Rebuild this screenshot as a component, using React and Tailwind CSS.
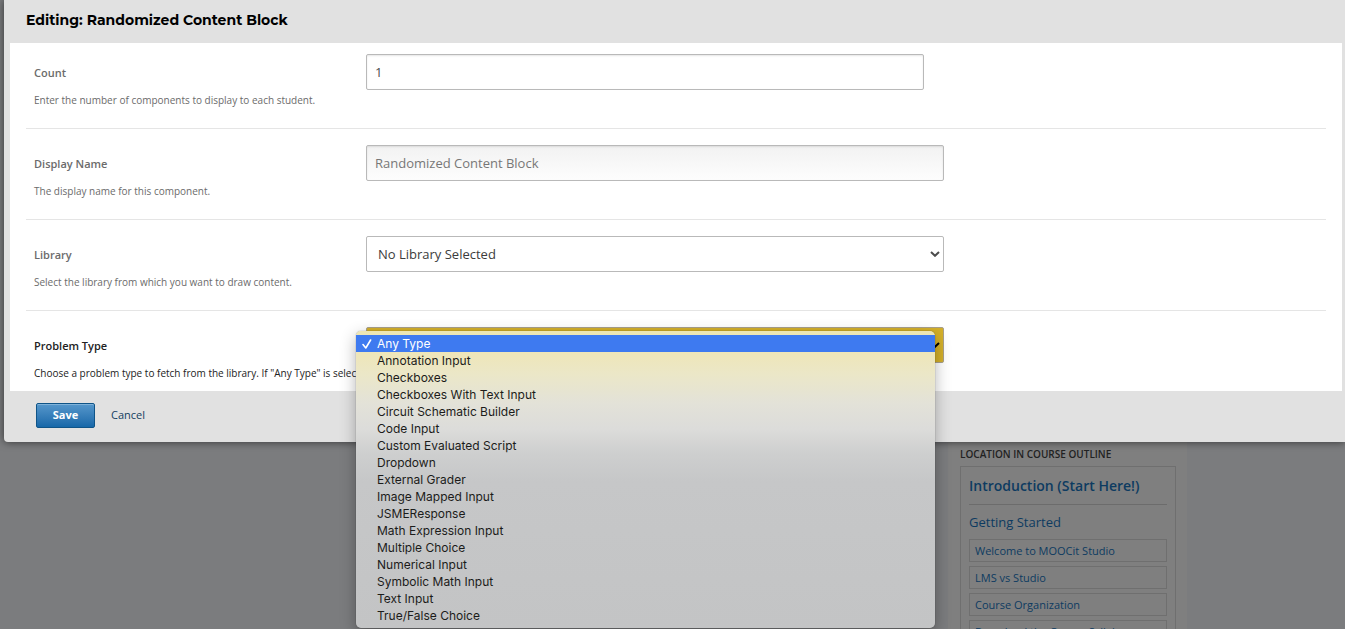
import React from "react";

const problemTypes = [
  "Any Type",
  "Annotation Input",
  "Checkboxes",
  "Checkboxes With Text Input",
  "Circuit Schematic Builder",
  "Code Input",
  "Custom Evaluated Script",
  "Dropdown",
  "External Grader",
  "Image Mapped Input",
  "JSMEResponse",
  "Math Expression Input",
  "Multiple Choice",
  "Numerical Input",
  "Symbolic Math Input",
  "Text Input",
  "True/False Choice",
];

const units = [
  "Welcome to MOOCit Studio",
  "LMS vs Studio",
  "Course Organization",
  "Download the Course Syllabus",
];

function Chevron({ className }) {
  return (
    <svg viewBox="0 0 10 6" aria-hidden="true" className={`pointer-events-none absolute top-[15px] right-1 h-[6px] w-[10px] ${className}`}>
      <path d="M1 1l4 3.8L9 1" fill="none" stroke="currentColor" strokeWidth="2" />
    </svg>
  );
}

function Row({ id, label, help, first, last, children }) {
  return (
    <li
      className={`flex items-start pl-2 ${first ? "pt-[11px]" : "pt-4"} ${
        last ? "pb-1.5 text-[#222222]" : "border-b border-[#e5e5e5] pb-4 text-[#6b6b6b]"
      }`}
    >
      <div className="w-[332px] shrink-0">
        <label htmlFor={id} className="block text-[11px] leading-[38px] font-semibold">
          {label}
        </label>
        <p className="pb-1 text-[10px] leading-4 whitespace-nowrap">{help}</p>
      </div>
      {children}
    </li>
  );
}

export default function App() {
  return (
    <div className="flex h-screen flex-col overflow-hidden bg-[#7b7c7e] font-['Open_Sans',sans-serif]">
      <section
        role="dialog"
        aria-labelledby="dialog-title"
        className="relative z-10 ml-1 shrink-0 rounded-bl-sm bg-[#e1e1e1] pr-[3px] pl-1.5 shadow-[0_0_8px_rgba(0,0,0,0.6)]"
      >
        <h2 id="dialog-title" className="h-[43px] pl-4 font-['Montserrat','Inter',sans-serif] text-[14px] leading-10 font-bold text-black">
          Editing: Randomized Content Block
        </h2>

        <ul className="bg-white px-4">
          <Row first id="count" label="Count" help="Enter the number of components to display to each student.">
            <input
              id="count"
              type="text"
              inputMode="numeric"
              defaultValue="1"
              className="h-9 w-[558px] rounded-xs border border-[#b9b9b9] bg-white px-2 text-[13px] text-[#4c4c4c] shadow-[inset_0_1px_2px_rgba(0,0,0,0.1)]"
            />
          </Row>
          <Row id="display-name" label="Display Name" help="The display name for this component.">
            <input
              id="display-name"
              type="text"
              defaultValue="Randomized Content Block"
              className="h-9 w-[578px] rounded-xs border border-[#b9b9b9] bg-linear-to-b from-[#f2f2f2] to-[#fdfdfd] px-2 text-[13px] text-[#777777] shadow-[inset_0_1px_2px_rgba(0,0,0,0.1)]"
            />
          </Row>
          <Row id="library" label="Library" help="Select the library from which you want to draw content.">
            <div className="relative w-[578px]">
              <select id="library" className="block h-9 w-full appearance-none rounded-xs border border-[#b9b9b9] bg-white px-[11px] pt-0.5 text-[13px] text-[#3c3c3c]">
                <option>No Library Selected</option>
              </select>
              <Chevron className="text-[#4c4c4c]" />
            </div>
          </Row>
          <Row
            last
            id="problem-type"
            label="Problem Type"
            help={'Choose a problem type to fetch from the library. If "Any Type" is selected'}
          >
            <div className="relative w-[578px]">
              <select id="problem-type" className="block h-9 w-full appearance-none rounded-xs border border-[#a8a08c] bg-[#d4b02a] px-[11px] pt-0.5 text-[13px] text-[#222222]">
                {problemTypes.map((type) => (
                  <option key={type}>{type}</option>
                ))}
              </select>
              <Chevron className="text-black" />
              <ul
                role="listbox"
                aria-label="Problem Type"
                className="absolute top-1 -left-2.5 w-[579px] rounded-[5px] bg-[linear-gradient(to_bottom,#ede6b4_0px,#eee6ba_24px,#ebe7c8_44px,#e3e2d8_72px,#dcdcda_98px,#cecfcf_122px,#c6c7c8_150px,#c3c4c5_297px)] py-1 font-['Inter',sans-serif] text-xs leading-[17px] text-[#1c1c1a] shadow-[0_0_1px_rgba(0,0,0,0.6),0_5px_16px_rgba(0,0,0,0.3)]"
              >
                {problemTypes.map((type, i) => (
                  <li
                    key={type}
                    role="option"
                    aria-selected={i === 0}
                    className={`flex h-[17px] items-center pl-1.5 ${i === 0 ? "bg-[#3e7af0] text-white" : ""}`}
                  >
                    <span className="w-[15px]">
                      {i === 0 && (
                        <svg viewBox="0 0 10 10" aria-hidden="true" className="size-2.5">
                          <path d="M1 5.6l2.8 3.4L8.6 1" fill="none" stroke="currentColor" strokeWidth="1.6" strokeLinecap="round" strokeLinejoin="round" />
                        </svg>
                      )}
                    </span>
                    {type}
                  </li>
                ))}
              </ul>
            </div>
          </Row>
        </ul>

        <footer className="flex items-center gap-4 pt-3 pb-3.5 pl-[26px] text-[11px]">
          <button type="button" className="h-[25px] w-[59px] rounded-xs border border-[#0f5488] bg-linear-to-b from-[#5597cb] to-[#1668a9] font-bold text-white shadow-[inset_0_1px_0_#7fb2d9]">
            Save
          </button>
          <a href="#cancel" className="text-[#13405f]">Cancel</a>
        </footer>
      </section>

      <aside className="mr-[158px] flex w-[239px] flex-1 flex-col self-end bg-[#7f7f7f] px-3 pt-1 text-[#0d3b61]">
        <h3 className="pb-1 text-[10px] leading-4 font-semibold whitespace-nowrap text-[#222222]">LOCATION IN COURSE OUTLINE</h3>
        <div className="w-[216px] border border-[#6f6f6f] px-2">
          <a href="#introduction" className="block border-b border-[#6c6c6c] text-[14px] leading-[37px] font-semibold">
            Introduction (Start Here!)
          </a>
          <a href="#getting-started" className="block text-[13px] leading-[34px]">Getting Started</a>
          <ul className="flex flex-col gap-1">
            {units.map((unit) => (
              <li key={unit}>
                <a href="#unit" className="block border border-[#6f6f6f] px-[5px] text-[11px] leading-[21px] whitespace-nowrap">
                  {unit}
                </a>
              </li>
            ))}
          </ul>
        </div>
      </aside>
    </div>
  );
}
